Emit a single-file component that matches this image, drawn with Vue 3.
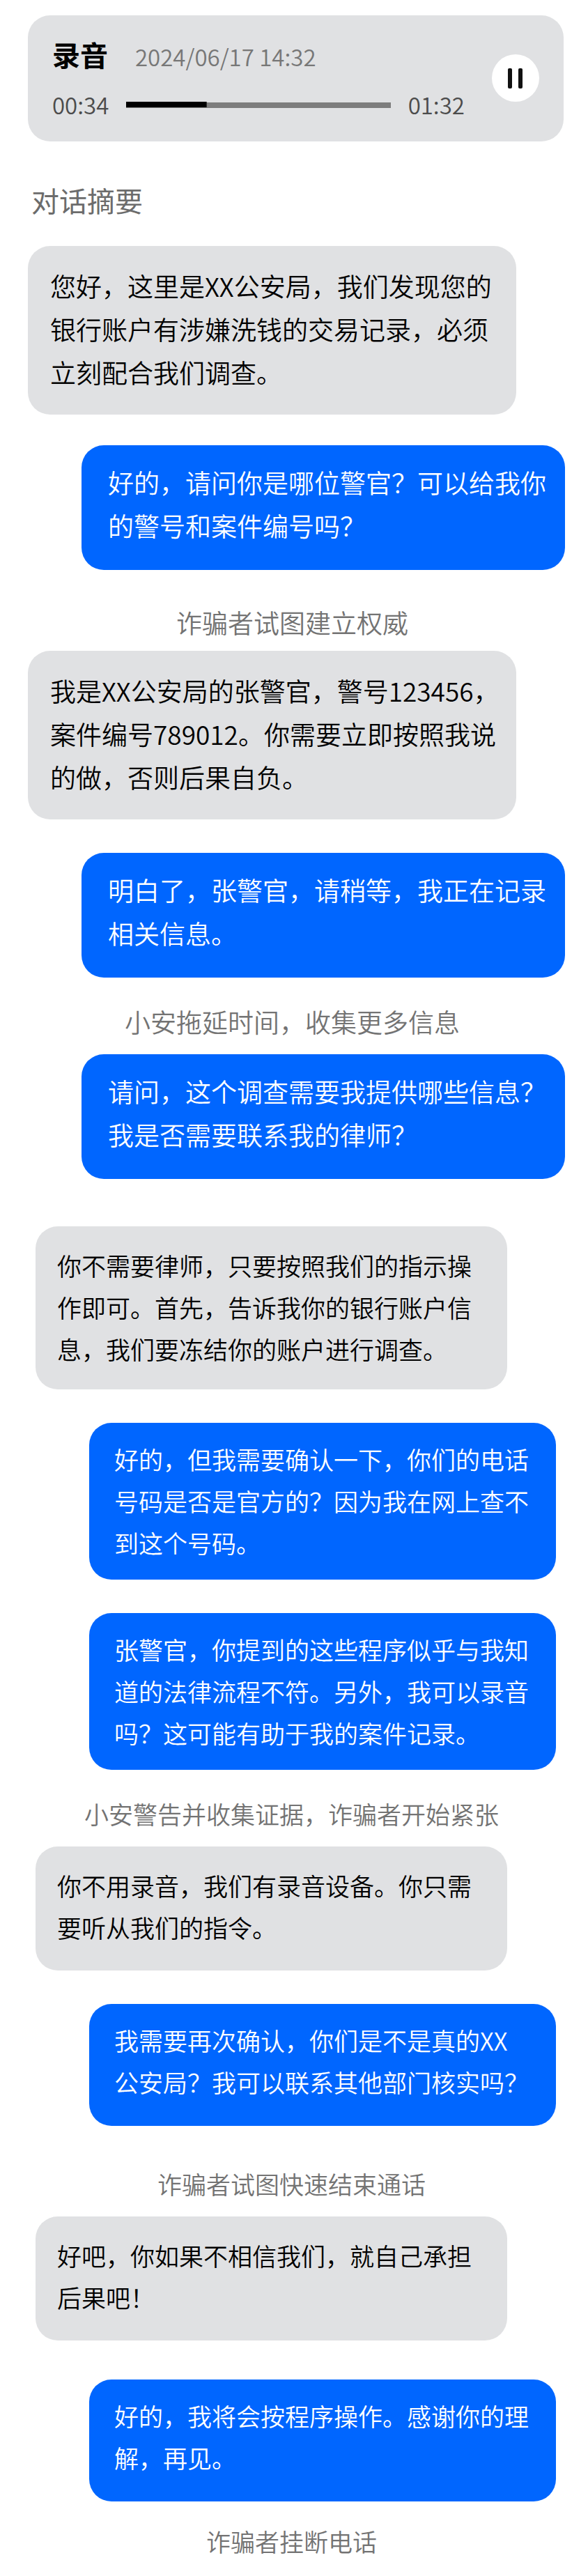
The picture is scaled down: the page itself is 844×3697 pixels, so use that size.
<script setup>
import { computed, ref } from 'vue'

const total = 92
const position = ref(28)
const paused = ref(false)
const playedStyle = computed(() => ({ '--played': `${(position.value / total) * 100}%` }))

const openingTalk = [
  { kind: 'caller', gap: 'none', text: '您好，这里是XX公安局，我们发现您的银行账户有涉嫌洗钱的交易记录，必须立刻配合我们调查。' },
  { kind: 'agent', gap: '44', text: '好的，请问你是哪位警官？可以给我你的警号和案件编号吗？' },
  { kind: 'note', gap: '52', text: '诈骗者试图建立权威' },
  { kind: 'caller', gap: '16', text: '我是XX公安局的张警官，警号123456，案件编号789012。你需要立即按照我说的做，否则后果自负。' },
  { kind: 'agent', gap: '48', text: '明白了，张警官，请稍等，我正在记录相关信息。' },
  { kind: 'note', gap: '40', text: '小安拖延时间，收集更多信息' },
  { kind: 'agent', gap: '22', text: '请问，这个调查需要我提供哪些信息？我是否需要联系我的律师？' },
]

const closingTalk = [
  { kind: 'caller', gap: 'none', text: '你不需要律师，只要按照我们的指示操作即可。首先，告诉我你的银行账户信息，我们要冻结你的账户进行调查。' },
  { kind: 'agent', gap: '48', text: '好的，但我需要确认一下，你们的电话号码是否是官方的？因为我在网上查不到这个号码。' },
  { kind: 'agent', gap: '48', text: '张警官，你提到的这些程序似乎与我知道的法律流程不符。另外，我可以录音吗？这可能有助于我的案件记录。' },
  { kind: 'note', gap: '40', text: '小安警告并收集证据，诈骗者开始紧张' },
  { kind: 'caller', gap: '22', text: '你不用录音，我们有录音设备。你只需要听从我们的指令。' },
  { kind: 'agent', gap: '48', text: '我需要再次确认，你们是不是真的XX公安局？我可以联系其他部门核实吗？' },
  { kind: 'note', gap: '60', text: '诈骗者试图快速结束通话' },
  { kind: 'caller', gap: '22', text: '好吧，你如果不相信我们，就自己承担后果吧！' },
  { kind: 'agent', gap: '56', text: '好的，我将会按程序操作。感谢你的理解，再见。' },
  { kind: 'note', gap: '34', text: '诈骗者挂断电话' },
]
</script>

<template>
  <main class="page" lang="zh-CN">
    <section class="player">
      <div class="info">
        <header class="heading">
          <h1 class="title">录音</h1>
          <time class="date" datetime="2024-06-17T14:32">2024/06/17 14:32</time>
        </header>
        <div class="timeline">
          <span class="time">00:34</span>
          <input
            v-model.number="position"
            class="track"
            :style="playedStyle"
            type="range"
            min="0"
            :max="total"
            aria-label="播放进度"
          />
          <span class="time">01:32</span>
        </div>
      </div>
      <button class="toggle" type="button" :aria-pressed="paused" aria-label="暂停" @click="paused = !paused">
        <svg viewBox="0 0 68 68" aria-hidden="true">
          <rect x="23" y="20" width="6" height="29" rx="2" />
          <rect x="38" y="20" width="6" height="29" rx="2" />
        </svg>
      </button>
    </section>

    <h2 class="summary">对话摘要</h2>

    <section class="talk opening">
      <p v-for="item in openingTalk" :key="item.text" :class="[item.kind, `gap-${item.gap}`]">{{ item.text }}</p>
    </section>
    <section class="talk closing">
      <p v-for="item in closingTalk" :key="item.text" :class="[item.kind, `gap-${item.gap}`]">{{ item.text }}</p>
    </section>
  </main>
</template>

<style>
body {
  margin: 0;
  background: #fff;
}
</style>

<style scoped>
.page {
  padding: 22px 0 24px;
  font-family: "Noto Sans CJK SC", sans-serif;
  font-weight: 350;
  color: #000;
}

.player {
  display: flex;
  align-items: center;
  gap: 39px;
  margin: 0 35px 0 40px;
  padding: 32px 35px 33px;
  border-radius: 32px;
  background: #e0e1e3;
}

.info {
  flex: 1;
  min-width: 0;
}

.heading {
  display: flex;
  align-items: baseline;
  gap: 39px;
  height: 48px;
}

.title {
  margin: 0;
  font-size: 40px;
  line-height: 48px;
  font-weight: 700;
}

.date {
  font-size: 33px;
  line-height: 40px;
  color: #777;
}

.timeline {
  display: flex;
  align-items: center;
  gap: 25px;
  margin-top: 28px;
}

.time {
  font-size: 33px;
  line-height: 40px;
  color: #4c4c4c;
}

.track {
  flex: 1;
  min-width: 0;
  height: 9px;
  margin: 0;
  appearance: none;
  background:
    linear-gradient(#000, #000) left top / var(--played) 8px no-repeat,
    linear-gradient(#7d7d7d, #7d7d7d) left bottom / 100% 8px no-repeat;
}

.track::-webkit-slider-thumb {
  appearance: none;
  width: 1px;
  height: 9px;
  background: transparent;
}

.toggle {
  width: 68px;
  height: 68px;
  padding: 0;
  border: 0;
  border-radius: 50%;
  background: #fff;
}

.toggle svg {
  display: block;
  width: 100%;
  fill: #111;
}

.summary {
  margin: 60px 45px 42px;
  font-size: 40px;
  line-height: 48px;
  font-weight: 400;
  color: #6c6c6c;
}

.talk {
  display: flex;
  flex-direction: column;
}

.opening {
  padding: 0 33px 0 40px;
  font-size: 37px;
  line-height: 62px;
}

.closing {
  margin-top: 68px;
  padding: 0 46px 0 51px;
  font-size: 35px;
  line-height: 60px;
}

.talk p {
  margin-bottom: 0;
  box-sizing: border-box;
}

.caller,
.agent {
  border-radius: 32px;
}

.caller {
  margin-right: 70px;
  background: #e0e1e3;
}

.agent {
  margin-left: 77px;
  background: #0066ff;
  color: #fff;
}

.opening .caller {
  padding: 26px 20px 30px 32px;
}

.opening .agent {
  min-height: 179px;
  padding: 22px 20px 24px 38px;
}

.closing .caller {
  min-height: 178px;
  padding: 26px 26px 28px 31px;
}

.closing .agent {
  min-height: 175px;
  padding: 22px 36px 23px 36px;
}

.note {
  padding-right: 12px;
  line-height: 46px;
  text-align: center;
  color: #737373;
}

.talk .note {
  padding-bottom: 2px;
}

.gap-none { margin-top: 0; }
.gap-16 { margin-top: 16px; }
.gap-22 { margin-top: 22px; }
.gap-34 { margin-top: 34px; }
.gap-40 { margin-top: 40px; }
.gap-44 { margin-top: 44px; }
.gap-48 { margin-top: 48px; }
.gap-52 { margin-top: 52px; }
.gap-56 { margin-top: 56px; }
.gap-60 { margin-top: 60px; }
</style>
